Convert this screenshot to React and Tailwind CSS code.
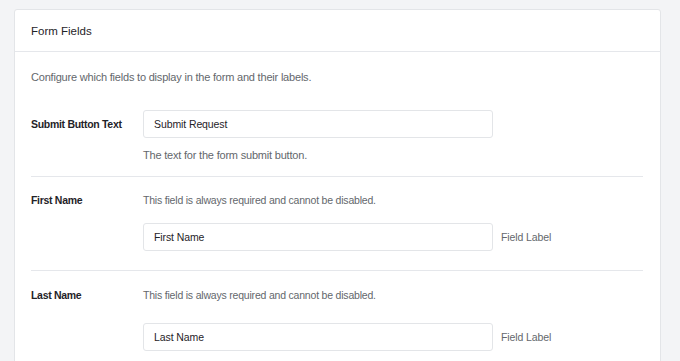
import React from 'react';

export default function App() {
  return (
    <div className="min-h-screen bg-[#f3f4f6] pt-[9px] pl-[14px] font-['Liberation_Sans',Arial,sans-serif] overflow-hidden h-[361px]">
      <div className="w-[647px] bg-white border border-[#e3e5e8] rounded-[3px]">
        {/* Header */}
        <div className="h-[42px] flex items-center pl-[16px] pr-[17px] border-b border-[#e5e7eb]">
          <h2 className="text-[11.5px] leading-[18px] text-[#1f2328]">Form Fields</h2>
        </div>

        {/* Body */}
        <div className="pl-[16px] pr-[17px] pt-[16px]">
          <p className="text-[11px] tracking-[-0.2px] leading-[18px] text-[#63676c]">
            Configure which fields to display in the form and their labels.
          </p>

          <div className="mt-[24px] pb-[12px] border-b border-[#e5e7eb]">
            <div className="flex items-center">
              <label className="w-[112px] text-[10.5px] tracking-[-0.3px] leading-[18px] font-bold text-[#1f2328]">Submit Button Text</label>
              <TextInput value="Submit Request" />
            </div>
            <p className="ml-[112px] mt-[8px] text-[11px] tracking-[-0.2px] leading-[18px] text-[#63676c]">
              The text for the form submit button.
            </p>
          </div>

          <FieldRow label="First Name" top="pt-[14px]" gap="mt-[14px]" />
          <FieldRow label="Last Name" top="pt-[15px]" gap="mt-[19px]" />
        </div>
      </div>
    </div>
  );
}

function TextInput({ value }) {
  return (
    <input
      defaultValue={value}
      className="w-[350px] h-[28px] px-[10px] text-[10.5px] tracking-[-0.1px] leading-[18px] text-[#1f2328] border border-[#e3e5e8] rounded-[3px] outline-none"
    />
  );
}

function FieldRow({ label, top, gap }) {
  return (
    <div className={`${top} pb-[19px] border-b border-[#e5e7eb]`}>
      <div className="flex">
        <span className="w-[112px] text-[10.5px] tracking-[-0.3px] leading-[18px] font-bold text-[#1f2328]">{label}</span>
        <span className="text-[10.5px] tracking-[-0.2px] leading-[18px] text-[#63676c]">This field is always required and cannot be disabled.</span>
      </div>
      <div className={`ml-[112px] ${gap} flex items-center gap-[8px]`}>
        <TextInput value={label} />
        <span className="text-[10.5px] tracking-[-0.1px] leading-[18px] text-[#63676c]">Field Label</span>
      </div>
    </div>
  );
}
